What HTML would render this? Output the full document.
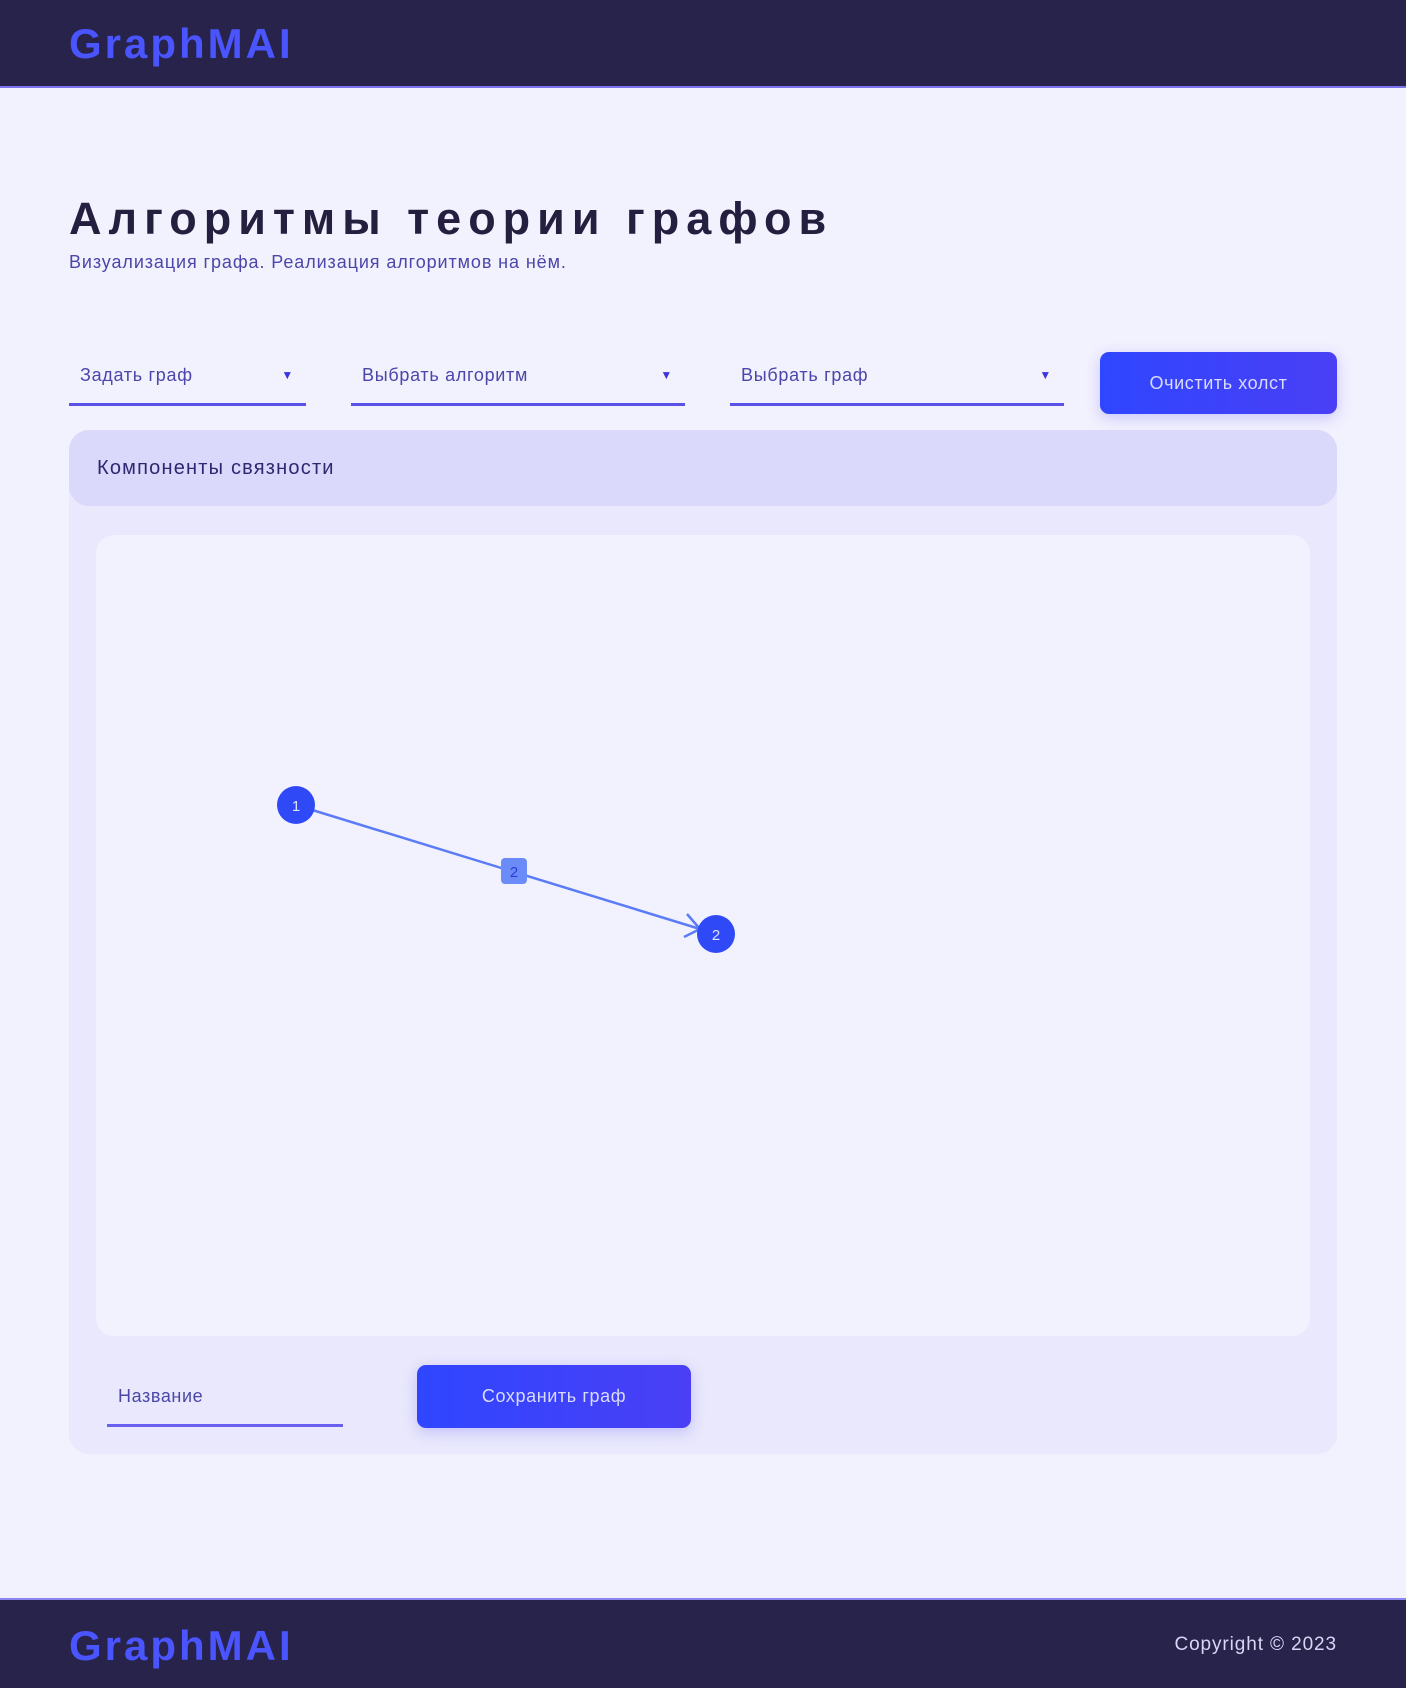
<!DOCTYPE html>
<html><head><meta charset="utf-8"><style>
*{box-sizing:border-box;margin:0;padding:0}
body{width:1406px;height:1688px;background:#f2f1fe;font-family:"Liberation Sans","DejaVu Sans",sans-serif;position:relative;overflow:hidden}
.hdr{position:absolute;left:0;top:0;width:1406px;height:88px;background:#28234a;border-bottom:2px solid #7d74f0}
.ftr{position:absolute;left:0;top:1598px;width:1406px;height:90px;background:#28234a;border-top:2px solid #8e86f0}
.logo{position:absolute;left:69px;font-size:42px;font-weight:bold;color:#4a55ff;letter-spacing:3px}
.abs{position:absolute}
h1{position:absolute;left:69px;top:193px;font-size:45px;font-weight:bold;color:#241f3f;letter-spacing:7px}
.sub{left:69px;top:252px;font-size:18px;color:#4b46a8;letter-spacing:0.9px}
.dd{position:absolute;top:360px;height:46px;border-bottom:3px solid #5a52e6;font-size:18px;color:#4b46a8;padding-left:11px;line-height:30px;letter-spacing:0.7px}
.dd span{position:absolute;right:12px;top:0;font-size:12px;color:#3b33e0}
.btn{position:absolute;background:linear-gradient(90deg,#2f46ff,#4a3ff5);border-radius:9px;color:#d9dbff;font-size:18px;text-align:center;box-shadow:0 4px 14px rgba(80,70,240,.25);letter-spacing:0.6px}
.panel{position:absolute;left:69px;top:430px;width:1268px;height:1024px;background:#e9e8fc;border-radius:20px}
.band{position:absolute;left:0;top:0;width:1268px;height:76px;background:#dad8fb;border-radius:20px;font-size:20px;color:#2d2870;padding-left:28px;line-height:76px;letter-spacing:1.2px}
.canvas{position:absolute;left:27px;top:105px;width:1214px;height:801px;background:#f2f1fe;border-radius:18px}
</style></head><body>
<div class="hdr"><div class="logo" style="top:20px">GraphMAI</div></div>
<h1>Алгоритмы теории графов</h1>
<div class="abs sub">Визуализация графа. Реализация алгоритмов на нём.</div>
<div class="dd" style="left:69px;width:237px">Задать граф<span>▼</span></div>
<div class="dd" style="left:351px;width:334px">Выбрать алгоритм<span>▼</span></div>
<div class="dd" style="left:730px;width:334px">Выбрать граф<span>▼</span></div>
<div class="btn" style="left:1100px;top:352px;width:237px;height:62px;line-height:62px">Очистить холст</div>
<div class="panel">
<div class="band">Компоненты связности</div>
<div class="canvas"></div>
<div class="abs" style="left:38px;top:950px;width:236px;height:47px;border-bottom:3px solid #6a60f0;font-size:18px;color:#4b46a8;padding-left:11px;line-height:32px;letter-spacing:0.6px">Название</div>
<div class="btn" style="left:348px;top:935px;width:274px;height:63px;line-height:63px">Сохранить граф</div>
</div>
<svg class="abs" style="left:0;top:0" width="1406" height="1688">
<line x1="296" y1="805" x2="700" y2="929" stroke="#5b7cf6" stroke-width="2.5"/>
<polyline points="687,914 700,929 684,937" fill="none" stroke="#5b7cf6" stroke-width="2.5"/>
<rect x="501" y="858" width="26" height="26" rx="4" fill="#6b8cf8"/>
<text x="514" y="877" font-size="15" fill="#2d3bd6" text-anchor="middle" font-family="Liberation Sans">2</text>
<circle cx="296" cy="805" r="19" fill="#3049f7"/>
<text x="296" y="811" font-size="15" fill="#dfe2ff" text-anchor="middle" font-family="Liberation Sans">1</text>
<circle cx="716" cy="934" r="19" fill="#3049f7"/>
<text x="716" y="940" font-size="15" fill="#dfe2ff" text-anchor="middle" font-family="Liberation Sans">2</text>
</svg>
<div class="ftr"><div class="logo" style="top:22px">GraphMAI</div>
<div class="abs" style="right:69px;top:34px;font-size:19px;color:#d8d6f5;letter-spacing:0.9px">Copyright © 2023</div></div>
</body></html>
